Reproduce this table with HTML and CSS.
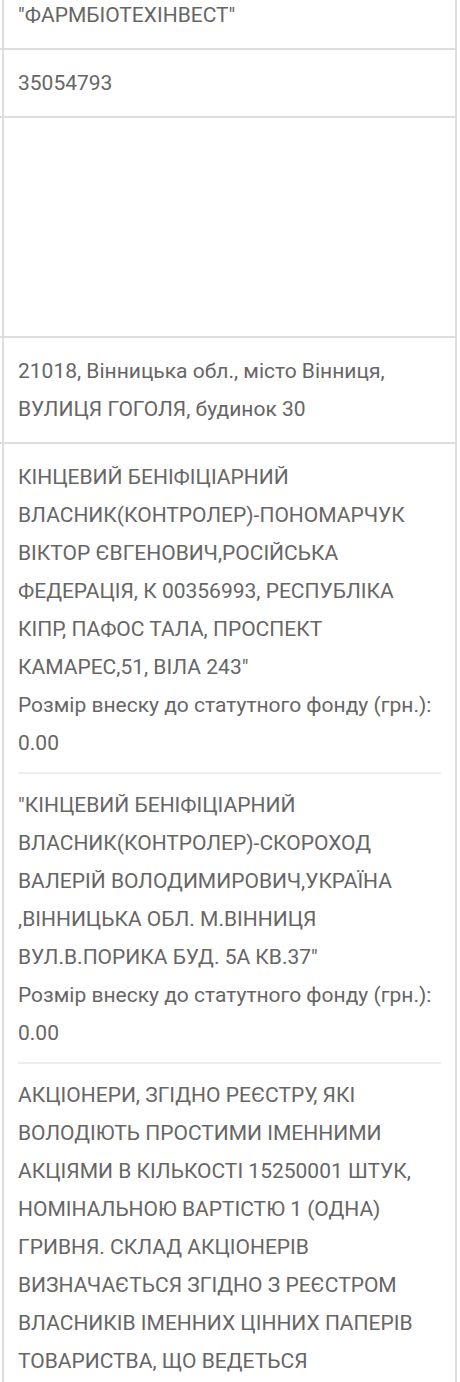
FILE: index.html
```html
<!DOCTYPE html>
<html lang="uk">
<head>
<meta charset="utf-8">
<title>Фармбіотехінвест</title>
<link rel="stylesheet" href="styles.css">
</head>
<body>
<div class="table">
  <div class="row">
    <div class="stub"></div>
    <div class="cell">"ФАРМБІОТЕХІНВЕСТ"</div>
  </div>
  <div class="row">
    <div class="stub"></div>
    <div class="cell">35054793</div>
  </div>
  <div class="row">
    <div class="stub"></div>
    <div class="cell cell-empty"></div>
  </div>
  <div class="row">
    <div class="stub"></div>
    <div class="cell">21018, Вінницька обл., місто Вінниця, ВУЛИЦЯ ГОГОЛЯ, будинок 30</div>
  </div>
  <div class="row">
    <div class="stub"></div>
    <div class="cell">
      <div class="founder">
        <div>КІНЦЕВИЙ БЕНІФІЦІАРНИЙ ВЛАСНИК(КОНТРОЛЕР)-ПОНОМАРЧУК ВІКТОР ЄВГЕНОВИЧ,РОСІЙСЬКА ФЕДЕРАЦІЯ, К 00356993, РЕСПУБЛІКА КІПР, ПАФОС ТАЛА, ПРОСПЕКТ КАМАРЕС,51, ВІЛА 243"</div>
        <div>Розмір внеску до статутного фонду (грн.): 0.00</div>
      </div>
      <div class="founder">
        <div>"КІНЦЕВИЙ БЕНІФІЦІАРНИЙ ВЛАСНИК(КОНТРОЛЕР)-СКОРОХОД ВАЛЕРІЙ ВОЛОДИМИРОВИЧ,УКРАЇНА ,ВІННИЦЬКА ОБЛ. М.ВІННИЦЯ ВУЛ.В.ПОРИКА БУД. 5А КВ.37"</div>
        <div>Розмір внеску до статутного фонду (грн.): 0.00</div>
      </div>
      <div class="founder">
        <div>АКЦІОНЕРИ, ЗГІДНО РЕЄСТРУ, ЯКІ ВОЛОДІЮТЬ ПРОСТИМИ ІМЕННИМИ АКЦІЯМИ В КІЛЬКОСТІ 15250001 ШТУК, НОМІНАЛЬНОЮ ВАРТІСТЮ 1 (ОДНА) ГРИВНЯ. СКЛАД АКЦІОНЕРІВ ВИЗНАЧАЄТЬСЯ ЗГІДНО З РЕЄСТРОМ ВЛАСНИКІВ ІМЕННИХ ЦІННИХ ПАПЕРІВ ТОВАРИСТВА, ЩО ВЕДЕТЬСЯ</div>
      </div>
    </div>
  </div>
</div>
<div class="fade"></div>
</body>
</html>
```

FILE: styles.css
```css
html, body {
  margin: 0;
  padding: 0;
  background: #ffffff;
  overflow: hidden;
}

body {
  font-family: "Roboto", "Liberation Sans", sans-serif;
  font-size: 21px;
  line-height: 38px;
  color: #666666;
}

.table {
  width: 457px;
  margin-top: -18px;
}

.row {
  display: grid;
  grid-template-columns: 2px 1fr;
  border-bottom: 2px solid #dddddd;
}

.cell {
  border-left: 2px solid #dddddd;
  border-right: 2px solid #dddddd;
  padding: 14px 14px;
}

.cell-empty {
  height: 218px;
  box-sizing: border-box;
}

.founder {
  padding-bottom: 10px;
  border-bottom: 2px solid #eeeeee;
}

.founder + .founder {
  padding-top: 12px;
}

.founder:last-child {
  border-bottom: none;
  padding-bottom: 0;
}

.fade {
  position: fixed;
  z-index: -1;
  left: 0;
  right: 0;
  bottom: 0;
  height: 80px;
  background: linear-gradient(to bottom, rgba(240, 240, 240, 0), rgba(236, 236, 236, 1));
  pointer-events: none;
}
```
